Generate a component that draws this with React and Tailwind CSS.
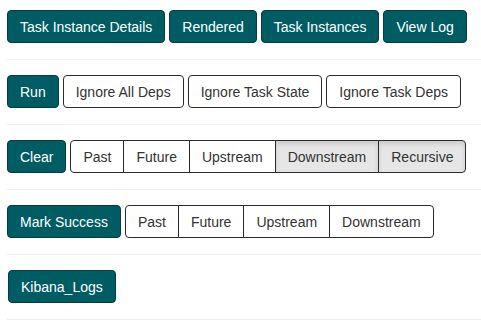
import React from "react";

const solid =
  "h-[33px] px-[12px] rounded-[4px] border border-[#0b3b3f] bg-[#005c63] text-white text-[14px] leading-none whitespace-nowrap";
const outline =
  "h-[33px] px-[12px] rounded-[4px] border border-[#2b2b2b] bg-white text-[#333] text-[14px] leading-none whitespace-nowrap";

const Group = ({ items, active = [] }) => (
  <div className="flex">
    {items.map((label, i) => {
      const first = i === 0;
      const last = i === items.length - 1;
      const on = active.includes(label);
      return (
        <button
          key={label}
          className={[
            "h-[33px] px-[12px] border border-[#2b2b2b] text-[14px] leading-none whitespace-nowrap text-[#333]",
            first ? "rounded-l-[4px]" : "-ml-px",
            last ? "rounded-r-[4px]" : "",
            on ? "bg-[#e6e6e6] shadow-[inset_0_3px_5px_rgba(0,0,0,0.125)]" : "bg-white",
          ].join(" ")}
        >
          {label}
        </button>
      );
    })}
  </div>
);

const Section = ({ children }) => (
  <>
    <div className="flex gap-[4px]">{children}</div>
    <hr className="mt-[16px] mb-[15px] border-t border-[#eeeeee]" />
  </>
);

export default function App() {
  return (
    <div
      className="pl-[7px] pt-[10px] bg-white w-[481px] h-[322px] overflow-hidden"
      style={{ fontFamily: '"Liberation Sans", Arial, sans-serif' }}
    >
      <Section>
        <button className={solid}>Task Instance Details</button>
        <button className={solid}>Rendered</button>
        <button className={solid}>Task Instances</button>
        <button className={solid}>View Log</button>
      </Section>
      <Section>
        <button className={solid}>Run</button>
        <button className={outline}>Ignore All Deps</button>
        <button className={outline}>Ignore Task State</button>
        <button className={outline}>Ignore Task Deps</button>
      </Section>
      <Section>
        <button className={solid}>Clear</button>
        <Group
          items={["Past", "Future", "Upstream", "Downstream", "Recursive"]}
          active={["Downstream", "Recursive"]}
        />
      </Section>
      <Section>
        <button className={solid}>Mark Success</button>
        <Group items={["Past", "Future", "Upstream", "Downstream"]} />
      </Section>
      <Section>
        <button className={solid + " ml-px"}>Kibana_Logs</button>
      </Section>
    </div>
  );
}
